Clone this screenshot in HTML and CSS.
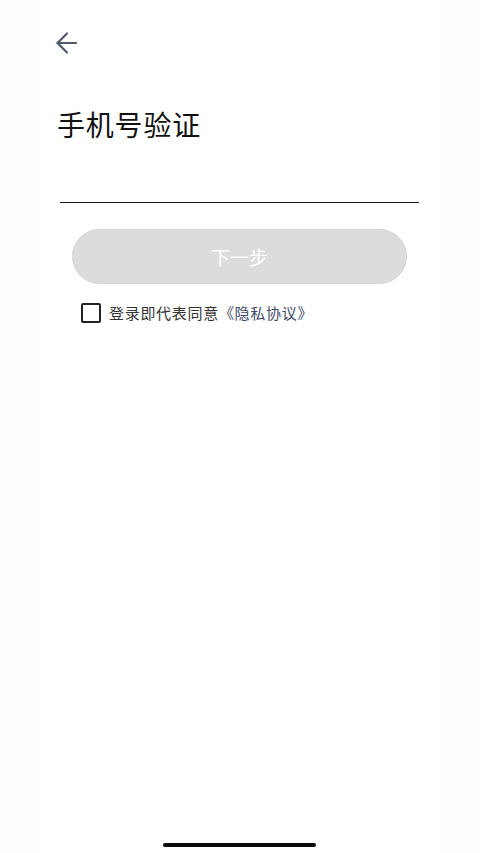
FILE: index.html
```html
<!DOCTYPE html>
<html lang="zh-CN">
<head>
<meta charset="utf-8">
<meta name="viewport" content="width=device-width, initial-scale=1">
<title>手机号验证</title>
<link rel="stylesheet" href="styles.css">
</head>
<body>
<div class="page">
  <header class="header">
    <button class="back" aria-label="返回">
      <svg width="24" height="24" viewBox="0 0 24 24" fill="none" stroke="#4f596b" stroke-width="2.2" stroke-linecap="round" stroke-linejoin="round">
        <path d="M21 12H2.5"/>
        <path d="M12 2.5L2.5 12L12 21.5"/>
      </svg>
    </button>
  </header>
  <h1 class="title">手机号验证</h1>
  <div class="field">
    <input class="phone" type="tel" aria-label="手机号">
  </div>
  <button class="next">下一步</button>
  <label class="agree">
    <span class="box"></span>
    <span class="agree-text">登录即代表同意<span class="link">《隐私协议》</span></span>
  </label>
  <div class="home-indicator"></div>
</div>
</body>
</html>
```

FILE: styles.css
```css
* { box-sizing: border-box; }
html, body {
  margin: 0;
  padding: 0;
  background: #ffffff;
}
body {
  font-family: "Noto Sans CJK SC", "Noto Sans", sans-serif;
  color: #111;
}
.page {
  width: 480px;
  height: 853px;
  display: flex;
  flex-direction: column;
  align-items: flex-start;
  background: linear-gradient(to right, #fdfdfc 0, #fdfdfc 40px, #ffffff 40px, #ffffff 440px, #fcfefe 440px);
}
.header {
  padding: 31px 0 0 55px;
}
.back {
  display: block;
  width: 24px;
  height: 24px;
  padding: 0;
  border: 0;
  background: none;
}
.back svg { display: block; }
.title {
  margin: 49px 0 0 57px;
  font-size: 28px;
  line-height: 40px;
  font-weight: 400;
  color: #111;
  letter-spacing: 0.8px;
}
.field {
  margin: 14px 0 0 60px;
  width: 359px;
  height: 45px;
  border-bottom: 1.6px solid #1a1a1a;
}
.phone {
  width: 100%;
  height: 100%;
  border: 0;
  outline: none;
  background: transparent;
  font-size: 18px;
  font-family: inherit;
}
.next {
  margin: 26px 0 0 72px;
  width: 335px;
  height: 55px;
  border-radius: 28px;
  border: 1px solid #d3d3d3;
  background: #dcdcdc;
  color: #ffffff;
  font-family: inherit;
  font-size: 19px;
  padding: 0;
}
.agree {
  margin: 19px 0 0 81px;
  display: flex;
  align-items: center;
  gap: 8px;
}
.box {
  width: 20px;
  height: 20px;
  border: 2px solid #222;
  border-radius: 2px;
}
.agree-text {
  font-size: 15px;
  line-height: 20px;
  color: #333;
  letter-spacing: 0.7px;
}
.link {
  color: #3d4a6a;
}
.home-indicator {
  margin: auto 0 6px 163px;
  width: 153px;
  height: 4px;
  border-radius: 2px;
  background: #0a0a0a;
}
```
